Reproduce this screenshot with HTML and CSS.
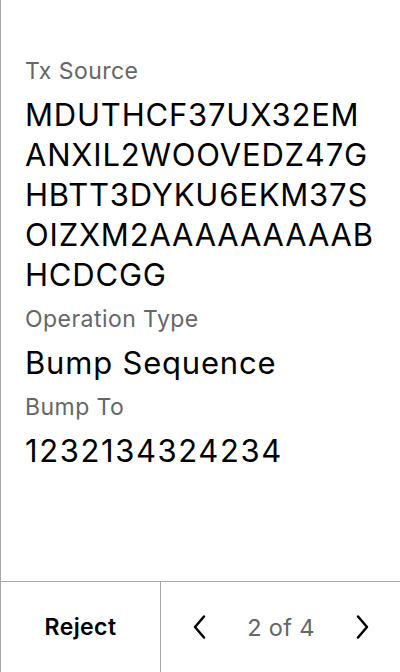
FILE: index.html
```html
<!DOCTYPE html>
<html>
<head>
<meta charset="utf-8">
<link rel="stylesheet" href="styles.css">
</head>
<body>
<div class="screen">
  <main class="content">
    <div class="field">
      <div class="label">Tx Source</div>
      <div class="value">MDUTHCF37UX32EMANXIL2WOOVEDZ47GHBTT3DYKU6EKM37SOIZXM2AAAAAAAAABHCDCGG</div>
    </div>
    <div class="field">
      <div class="label">Operation Type</div>
      <div class="value">Bump Sequence</div>
    </div>
    <div class="field">
      <div class="label">Bump To</div>
      <div class="value num">1232134324234</div>
    </div>
  </main>
  <footer class="bar">
    <div class="reject">Reject</div>
    <div class="pager">
      <svg class="chev" width="20" height="28" viewBox="0 0 20 28"><path d="M15 3.5 L6 14 L15 24.5" fill="none" stroke="#000" stroke-width="2.5" stroke-linecap="round" stroke-linejoin="round"/></svg>
      <span class="count">2 of 4</span>
      <svg class="chev" width="20" height="28" viewBox="0 0 20 28"><path d="M5 3.5 L14 14 L5 24.5" fill="none" stroke="#000" stroke-width="2.5" stroke-linecap="round" stroke-linejoin="round"/></svg>
    </div>
  </footer>
</div>
</body>
</html>
```
FILE: styles.css
```css
* { box-sizing: border-box; }
html, body { margin: 0; padding: 0; background: #fff; }
body { font-family: Inter, "Noto Sans", sans-serif; color: #000; }
.screen {
  width: 400px;
  height: 672px;
  border-left: 1px solid #a8a8a8;
  display: flex;
  flex-direction: column;
}
.content {
  flex: 1;
  padding: 55px 24px 0 24px;
  display: flex;
  flex-direction: column;
  gap: 8px;
}
.field {
  display: flex;
  flex-direction: column;
  gap: 8px;
}
.label {
  font-size: 23px;
  line-height: 32px;
  letter-spacing: 0.45px;
  color: #666;
}
.value {
  font-size: 31px;
  line-height: 40px;
  letter-spacing: 0.8px;
  word-break: break-all;
}
.value.num {
  letter-spacing: 1.6px;
}
.bar {
  height: 91px;
  border-top: 1px solid #a8a8a8;
  display: flex;
}
.reject {
  width: 160px;
  border-right: 1px solid #a8a8a8;
  display: flex;
  align-items: center;
  justify-content: center;
  font-size: 23px;
  font-weight: 600;
  letter-spacing: 0.4px;
}
.pager {
  flex: 1;
  display: flex;
  align-items: center;
  justify-content: space-between;
  padding: 0 27px 0 28px;
}
.count {
  font-size: 23.5px;
  letter-spacing: 0.3px;
  color: #666;
}
```
